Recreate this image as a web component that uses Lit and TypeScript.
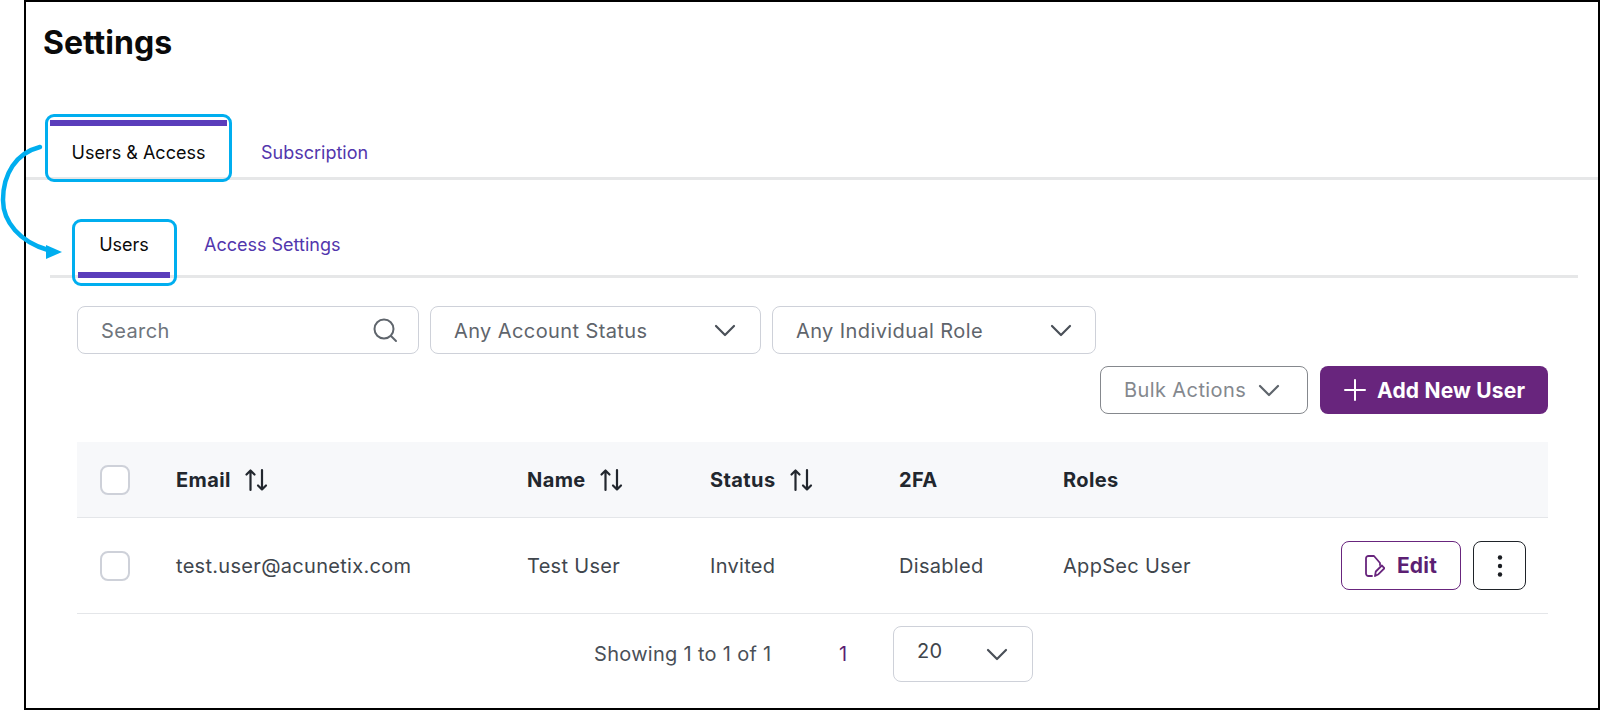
import { LitElement, html, css, svg } from "lit";
import { customElement } from "lit/decorators.js";

const chevron = (w = 22, color = "#4a5058") => html`<svg width=${w} height="13" viewBox="0 0 22 13" fill="none" stroke=${color} stroke-width="2.2" stroke-linecap="round" stroke-linejoin="round"><path d="M2 2l9 9 9-9"/></svg>`;
const sortIcon = html`<svg width="24" height="24" viewBox="0 0 24 24" fill="none" stroke="#22272e" stroke-width="2.2" stroke-linecap="round" stroke-linejoin="round"><path d="M6.500 22V2.500M2.500 6.500l4-4 4 4"/><path d="M18 2v19.500M14 17.500l4 4 4-4"/></svg>`;

@customElement("app-root")
export class AppRoot extends LitElement {
  static styles = css`
    :host { display: block; width: 1600px; height: 710px; font-family: "Inter", "Liberation Sans", sans-serif; background: #fff; color: #3f454c; overflow: hidden; }
    .frame { position: relative; box-sizing: border-box; width: 1576px; height: 710px; margin-left: 24px; border: 2px solid #000; background: #fff; }
    h1 { margin: 0; padding: 21px 0 0 17px; height: 76px; box-sizing: border-box; font-size: 32px; line-height: 40px; font-weight: 700; color: #0a0a0a; }
    .tabs { display: flex; height: 102px; box-sizing: border-box; border-bottom: 3px solid #e6e7e8; padding: 0 0 0 24px; align-items: flex-end; }
    .tab { font-size: 18px; line-height: 22px; padding-bottom: 13px; }
    .tab.on { color: #0a0a0a; }
    .tab.off { color: #5236ad; }
    .t1 { width: 177px; text-align: center; height: 57px; box-sizing: border-box; border-top: 6px solid #5a3dbb; padding-top: 16px; }
    .t2 { margin-left: 34px; }
    .subtabs { display: flex; height: 98px; box-sizing: border-box; margin: 0 20px 0 24px; border-bottom: 3px solid #e6e7e8; align-items: flex-end; position: relative; }
    .s1 { width: 92px; margin-left: 28px; text-align: center; height: 55px; box-sizing: border-box; border-bottom: 6px solid #5a3dbb; padding: 11px 0 0; margin-bottom: -3px; }
    .s2 { margin-left: 34px; padding-bottom: 19px; }
    .filters { display: flex; gap: 11px; margin: 28px 0 0 51px; }
    .field { box-sizing: border-box; height: 48px; border: 1px solid #ced1d9; border-radius: 8px; display: flex; align-items: center; justify-content: space-between; font-size: 20px; letter-spacing: 0.4px; color: #5f656c; padding-top: 2px !important; }
    .field svg { margin-bottom: 2px; }
    .search { width: 342px; padding: 0 20px 0 23px; color: #6f757c; }
    .st1 { width: 331px; padding: 0 24px 0 23px; }
    .st2 { width: 324px; padding: 0 23px 0 23px; }
    .actions { display: flex; justify-content: flex-end; gap: 12px; margin: 12px 50px 0 0; }
    .btn { box-sizing: border-box; height: 48px; border-radius: 8px; display: flex; align-items: center; font-size: 20px; letter-spacing: 0.4px; }
    .bulk { width: 208px; border: 1px solid #85888d; color: #84888e; padding-left: 23px; gap: 12px; }
    .add { width: 228px; background: #68257d; color: #fff; font-weight: 700; padding-left: 24px; gap: 11px; font-size: 21px; letter-spacing: 0.2px; }
    .table { margin: 28px 50px 0 51px; }
    .row { display: grid; grid-template-columns: 99px 351px 183px 189px 164px 180px 1fr; align-items: center; border-bottom: 1px solid #e4e6e9; font-size: 20px; letter-spacing: 0.3px; color: #40464d; }
    .head { height: 75px; background: #f7f8fa; font-weight: 700; color: #22272e; letter-spacing: 0.4px; }
    .body { height: 95px; }
    .cell { display: flex; align-items: center; gap: 13px; }
    .check { box-sizing: border-box; width: 30px; height: 30px; margin-left: 23px; border: 2px solid #ced1d9; border-radius: 8px; background: #fff; }
    .ops { display: flex; justify-content: flex-end; gap: 12px; padding-right: 22px; }
    .edit { width: 120px; height: 49px; border: 1px solid #68257d; color: #5c1f73; font-weight: 700; justify-content: center; gap: 12px; font-size: 21px; letter-spacing: 0.2px; }
    .kebab { width: 53px; height: 49px; border: 1px solid #1f2329; justify-content: center; }
    .pager { display: flex; align-items: center; margin: 12px 0 0 568px; font-size: 20px; letter-spacing: 0.3px; color: #4a5058; }
    .count { width: 245px; }
    .num { color: #5c1f73; width: 54px; }
    .size { box-sizing: border-box; width: 140px; height: 56px; border: 1px solid #ced1d9; border-radius: 8px; display: flex; align-items: center; justify-content: space-between; padding: 0 24px 7px 23px; color: #3f454c; }
    .size svg { margin-top: 8px; }
    .callout { position: absolute; box-sizing: border-box; border: 3px solid #00aeef; border-radius: 9px; pointer-events: none; }
    .c1 { left: 19px; top: 112px; width: 187px; height: 68px; }
    .c2 { left: 46px; top: 217px; width: 105px; height: 67px; }
    .arrow { position: absolute; left: -26px; top: 140px; pointer-events: none; }
  `;

  private head(label: string, sort = true) {
    return html`<div class="cell">${label}${sort ? sortIcon : ""}</div>`;
  }

  render() {
    return html`<div class="frame">
      <h1>Settings</h1>
      <div class="tabs">
        <div class="tab on t1">Users &amp; Access</div>
        <div class="tab off t2">Subscription</div>
      </div>
      <div class="subtabs">
        <div class="tab on s1">Users</div>
        <div class="tab off s2">Access Settings</div>
      </div>
      <div class="filters">
        <div class="field search">Search
          <svg width="26" height="26" viewBox="0 0 26 26" fill="none" stroke="#5f656c" stroke-width="2" stroke-linecap="round"><circle cx="12" cy="12" r="9.500"/><path d="M19 19l5 5"/></svg>
        </div>
        <div class="field st1">Any Account Status ${chevron()}</div>
        <div class="field st2">Any Individual Role ${chevron()}</div>
      </div>
      <div class="actions">
        <div class="btn bulk">Bulk Actions ${chevron(22, "#5f656c")}</div>
        <div class="btn add">
          <svg width="22" height="22" viewBox="0 0 22 22" fill="none" stroke="#fff" stroke-width="2" stroke-linecap="round"><path d="M11 1v20M1 11h20"/></svg>
          Add New User
        </div>
      </div>
      <div class="table">
        <div class="row head">
          <div class="check"></div>
          ${this.head("Email")}${this.head("Name")}${this.head("Status")}${this.head("2FA", false)}${this.head("Roles", false)}
          <div></div>
        </div>
        <div class="row body">
          <div class="check"></div>
          <div>test.user@acunetix.com</div><div>Test User</div><div>Invited</div><div>Disabled</div><div>AppSec User</div>
          <div class="ops">
            <div class="btn edit">
              <svg width="20" height="22" viewBox="0 0 20 22" fill="none" stroke="#68257d" stroke-width="1.800" stroke-linecap="round" stroke-linejoin="round"><path d="M7 21H3.500A2.500 2.500 0 0 1 1 18.500v-15A2.500 2.500 0 0 1 3.500 1H9l6 7v2"/><path d="M10 21l.8-4.500 6-6 2.700 2.700-6 6z"/></svg>
              Edit
            </div>
            <div class="btn kebab">
              <svg width="6" height="24" viewBox="0 0 6 24" fill="#1a1d22"><circle cx="3" cy="3.500" r="2.200"/><circle cx="3" cy="12" r="2.200"/><circle cx="3" cy="20.500" r="2.200"/></svg>
            </div>
          </div>
        </div>
      </div>
      <div class="pager">
        <span class="count">Showing 1 to 1 of 1</span>
        <span class="num">1</span>
        <div class="size">20 ${chevron()}</div>
      </div>
      <div class="callout c1"></div>
      <div class="callout c2"></div>
      <svg class="arrow" width="70" height="130" viewBox="0 0 70 130" fill="none">
        ${svg`<path d="M40 5C16 11 3 32 3 58C3 80 20 100 48 108" stroke="#00aeef" stroke-width="4.500" stroke-linecap="round"/><path d="M46 103L62 110L46 117z" fill="#00aeef"/>`}
      </svg>
    </div>`;
  }
}
